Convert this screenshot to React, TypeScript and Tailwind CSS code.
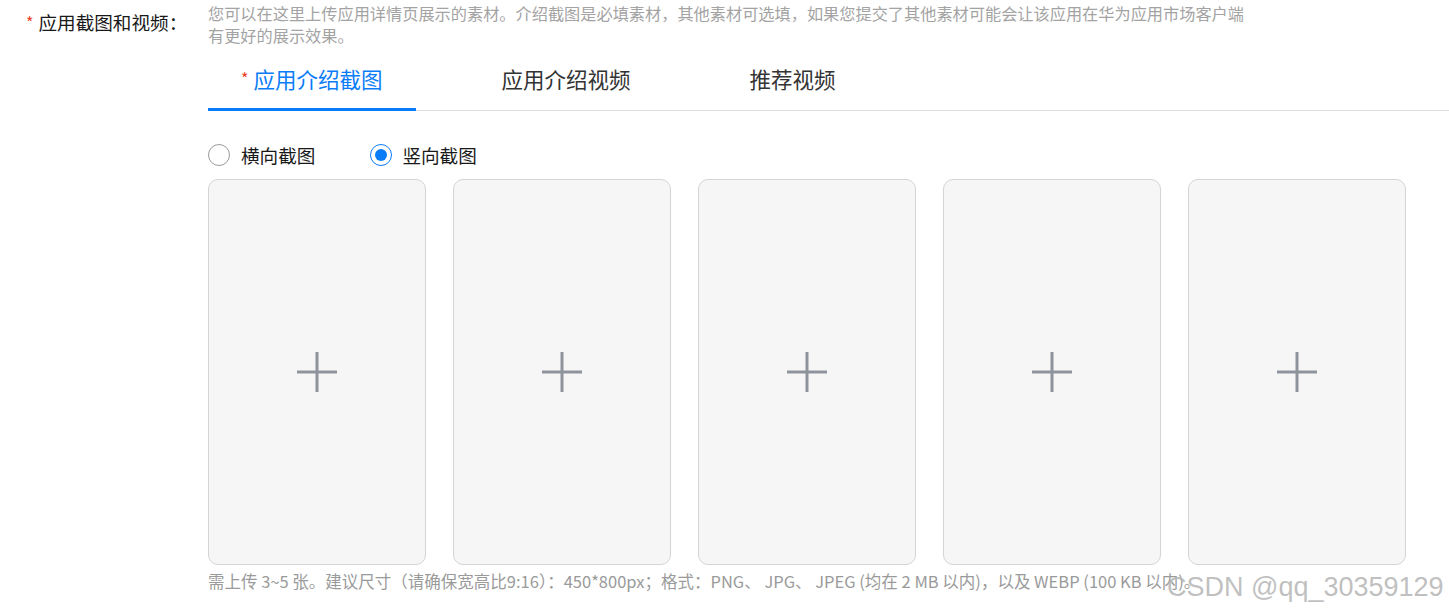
import React from "react";

const font = { fontFamily: '"Noto Sans CJK SC", "Noto Sans", sans-serif' };

function Plus() {
  return (
    <svg width="42" height="42" viewBox="0 0 42 42">
      <line x1="21" y1="1" x2="21" y2="41" stroke="#8e939c" strokeWidth="3" />
      <line x1="1" y1="21" x2="41" y2="21" stroke="#8e939c" strokeWidth="3" />
    </svg>
  );
}

export default function App() {
  return (
    <div
      className="relative w-[1449px] h-[614px] bg-white overflow-hidden"
      style={font}
    >
      <div className="flex">
        <div className="w-[208px] shrink-0 pl-[26px] pt-[8px] flex text-[18.6px] leading-[28px] text-[#191919]">
          <span className="text-[#e84026] mr-[5px] text-[16px]">*</span>
          <span>应用截图和视频：</span>
        </div>
        <div className="flex-1 flex flex-col">
          <p className="w-[1040px] text-[16.2px] leading-[22px] text-[#a3a3a3] pt-[2px]">
            您可以在这里上传应用详情页展示的素材。介绍截图是必填素材，其他素材可选填，如果您提交了其他素材可能会让该应用在华为应用市场客户端有更好的展示效果。
          </p>
          <div className="mt-[3px] flex gap-[53px] border-b border-[#dedede] h-[62px]">
            <div className="relative px-[33px] flex items-center justify-center text-[21.5px] text-[#0a7cf8]">
              <span className="text-[#e84026] text-[16px] mr-[5px] -mt-[4px]">*</span>
              应用介绍截图
              <div className="absolute left-0 right-0 bottom-[-1px] h-[3px] bg-[#0a7cf8]" />
            </div>
            <div className="px-[33px] flex items-center text-[21.5px] text-[#333]">
              应用介绍视频
            </div>
            <div className="px-[33px] flex items-center text-[21.5px] text-[#333]">
              推荐视频
            </div>
          </div>
          <div className="mt-[32px] flex items-center gap-[55px] text-[18.6px] text-[#191919] h-[24px]">
            <label className="flex items-center gap-[11px]">
              <span className="w-[22px] h-[22px] rounded-full border border-[#9a9a9a] bg-white" />
              横向截图
            </label>
            <label className="flex items-center gap-[10px]">
              <span className="w-[22px] h-[22px] rounded-full border-[1.5px] border-[#0a7cf8] bg-white flex items-center justify-center">
                <span className="w-[12px] h-[12px] rounded-full bg-[#0a7cf8]" />
              </span>
              竖向截图
            </label>
          </div>
          <div className="mt-[12px] flex gap-[27px]">
            {[0, 1, 2, 3, 4].map((i) => (
              <div
                key={i}
                className="w-[218px] h-[386px] rounded-[10px] border border-[#d4d4d4] bg-[#f6f6f6] flex items-center justify-center"
              >
                <Plus />
              </div>
            ))}
          </div>
          <p className="mt-[4px] text-[16.5px] leading-[24px] text-[#9a9a9a]">
            需上传 3~5 张。建议尺寸（请确保宽高比9:16）：450*800px；格式：PNG、 JPG、 JPEG (均在 2 MB 以内)，以及 WEBP (100 KB 以内)。
          </p>
        </div>
      </div>
      <div
        className="absolute left-[1167px] top-[569px] text-[27px] leading-[36px] text-[#b8b8b8]/90"
        style={{ fontFamily: '"Liberation Sans", Arial, sans-serif' }}
      >
        CSDN @qq_30359129
      </div>
    </div>
  );
}
